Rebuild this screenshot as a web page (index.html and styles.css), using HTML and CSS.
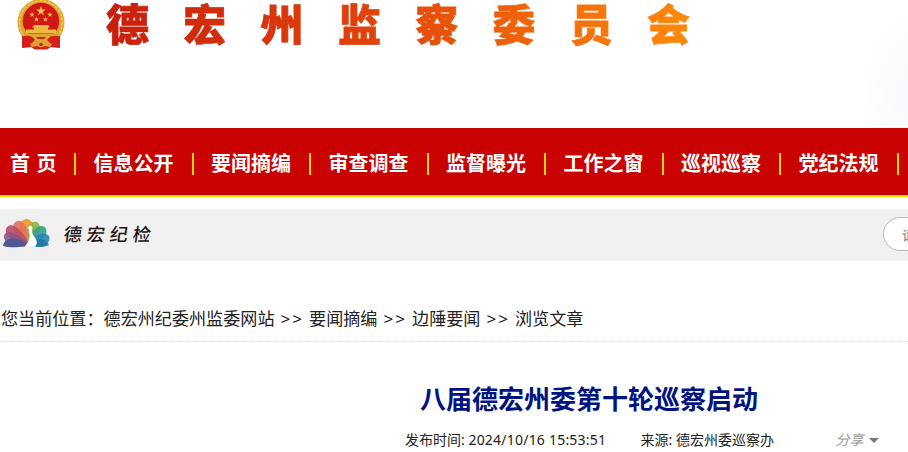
FILE: index.html
```html
<!DOCTYPE html>
<html lang="zh-CN">
<head>
<meta charset="utf-8">
<title>八届德宏州委第十轮巡察启动</title>
<link rel="stylesheet" href="styles.css">
</head>
<body>
<header class="header">
  <svg class="emblem" viewBox="0 0 48 50">
    <path fill="#d81e18" d="M5 32L43 32L42 48L34 47L30 49.500L18 49.500L14 47L6 48Z"/>
    <circle cx="24" cy="22.500" r="23.500" fill="#dda32b"/>
    <circle cx="24" cy="22.500" r="21.500" fill="none" stroke="#f3ca59" stroke-width="1.600" stroke-dasharray="3 1.300"/>
    <circle cx="24" cy="21" r="18.200" fill="#d01818"/>
    <path fill="#f3c64b" d="M24 6l1.200 3.500h3.700l-3 2.200 1.100 3.600-3-2.200-3 2.200 1.100-3.600-3-2.200h3.700z"/>
    <path fill="#efbb45" d="M15 12l.7 1.800h2l-1.600 1.200.6 2-1.700-1.200-1.700 1.200.6-2-1.600-1.200h2zM33 12l.7 1.800h2l-1.600 1.200.6 2-1.700-1.200-1.700 1.200.6-2-1.600-1.200h2zM19.500 17l.7 1.600h1.900l-1.500 1.200.6 1.900-1.700-1.200-1.700 1.200.6-1.900-1.500-1.200h1.900zM28.500 17l.7 1.600h1.900l-1.500 1.200.6 1.900-1.700-1.200-1.700 1.200.6-1.900-1.500-1.200h1.900z"/>
    <path fill="#f0b83c" d="M17 25h14l2 2.500h-2v2h8v4H9v-4h8v-2h-2z"/>
    <path fill="#e0a632" d="M8 34h32l-3 6-7 3H18l-7-3z"/>
    <path fill="#d42019" d="M5 36c7-1 11 0 13 4l-5 5-8 3zM43 36c-7-1-11 0-13 4l5 5 8 3zM19 37h10l-2 2h-6z"/>
    <path fill="#dfa136" d="M13 44l6-2 5 1 5-1 6 2-2 3-5-1-4 1.500-4-1.500-5 1z"/>
    <circle cx="24" cy="44.500" r="1.700" fill="#ca241a"/>
  </svg>
  <h1 class="site-name">德宏州监察委员会</h1>
</header>
<nav class="nav">
  <a class="home">首 页</a><a>信息公开</a><a>要闻摘编</a><a>审查调查</a><a>监督曝光</a><a>工作之窗</a><a>巡视巡察</a><a>党纪法规</a>
</nav>
<section class="toolbar">
  <svg class="peacock" viewBox="0 0 48 30">
    <path fill="#e9a23b" d="M25 28C15 15 14 3 24 0.500c10 2 10 15 1 27.500z"/>
    <path fill="#e2705c" fill-opacity=".9" d="M26 28C12 21 6 6 14 3c8-3 13 11 12 25z"/>
    <path fill="#86b646" fill-opacity=".9" d="M26 28C22 15 27 1 35 4c7 5 1 17-9 24z"/>
    <path fill="#b94c69" fill-opacity=".9" d="M27 28C9 25-1 15 4 9c7-7 19 8 23 19z"/>
    <path fill="#35a08c" fill-opacity=".9" d="M27 28C26 16 35 4 43 9c5 7-5 16-16 19z"/>
    <path fill="#8a5088" fill-opacity=".85" d="M27 28C14 31-1 26 1 17c5-7 20 2 26 11z"/>
    <path fill="#2788b2" fill-opacity=".9" d="M27 28c1-10 13-16 20-10 3 9-9 13-20 10z"/>
    <path fill="#505894" d="M27 28C15 18 2 18 0 28c7 3 18 1 27 0z"/>
    <path fill="#267ba4" d="M27 28c6-9 15-9 20-1-5 3-13 3-20 1z"/>
    <path fill="#fff" d="M26 9c1-2 4-2 4 1-1 4 0 7 3 10 2 3 2 6 0 9H22c4-4 6-9 5-14-1-2-1-3 0-4l-2-1z"/>
  </svg>
  <span class="brand">德宏纪检</span>
  <div class="search">请输入关键字</div>
</section>
<div class="crumbs"><span>您当前位置：</span><a>德宏州纪委州监委网站</a><i>&gt;&gt;</i><a>要闻摘编</a><i>&gt;&gt;</i><a>边陲要闻</a><i>&gt;&gt;</i><a>浏览文章</a></div>
<article class="article">
  <h2 class="title">八届德宏州委第十轮巡察启动</h2>
  <div class="meta">
    <span class="time">发布时间: <span class="date">2024/10/16 15:53:51</span></span>
    <span class="source">来源: 德宏州委巡察办</span>
    <span class="share">分享</span><span class="caret"></span>
  </div>
</article>
</body>
</html>
```
FILE: styles.css
```css
* { box-sizing: border-box; }
body {
  margin: 0;
  height: 452px;
  overflow: hidden;
  background: #fff;
  color: #222;
  font-family: "Noto Sans", "Noto Sans CJK SC", sans-serif;
}
.header {
  display: flex;
  align-items: flex-start;
  height: 128px;
  padding-left: 17px;
  background: radial-gradient(ellipse 60px 90px at 920px 95px, #f5f7fb, #fff);
}
.emblem { width: 48px; height: 50px; flex: none; }
.site-name {
  margin: 0 0 0 41px;
  height: 52px;
  line-height: 44px;
  font-family: "Noto Sans CJK SC", sans-serif;
  font-size: 43px;
  font-weight: 900;
  letter-spacing: 34.3px;
  white-space: nowrap;
  color: transparent;
  background: linear-gradient(90deg, #c81e0c, #e2450b 45%, #ff8a0a 95%);
  background-clip: text;
  -webkit-background-clip: text;
  -webkit-text-stroke: 0.8px transparent;
}
.nav {
  display: flex;
  align-items: center;
  width: 908px;
  height: 69px;
  overflow: hidden;
  background: #c90202;
  border-bottom: 2px solid #ffe600;
}
.nav a {
  flex: none;
  width: 117.5px;
  height: 22px;
  margin-top: 5px;
  padding-left: 17.5px;
  border-right: 2px solid #ffd800;
  color: #fff;
  font: bold 20px/20px "Noto Sans CJK SC", sans-serif;
  white-space: nowrap;
}
.nav .home { width: 76px; padding-left: 10px; word-spacing: 2px; }
.toolbar {
  display: flex;
  align-items: center;
  width: 908px;
  height: 52px;
  margin-top: 12px;
  padding-left: 3px;
  overflow: hidden;
  background: #f0f0f0;
}
.peacock { width: 47px; height: 30px; margin-top: -4px; flex: none; }
.brand {
  flex: none;
  width: 833px;
  margin-top: -4px;
  padding-left: 14px;
  font: 500 18px/30px "Noto Sans CJK SC", sans-serif;
  letter-spacing: 5px;
  color: #21110f;
  transform: skewX(-8deg);
  transform-origin: left center;
}
.search {
  flex: none;
  width: 220px;
  height: 34px;
  margin-top: -2px;
  padding-left: 18px;
  border: 1px solid #bbb;
  border-radius: 17px;
  background: #fff;
  color: #757575;
  font-size: 13px;
  line-height: 34px;
}
.crumbs {
  display: flex;
  height: 81px;
  padding: 45px 0 0 1px;
  border-bottom: 1px dotted #ddd;
  font-size: 17.1px;
  line-height: 26px;
  white-space: nowrap;
}
.crumbs i {
  width: 34.6px;
  padding-left: 6px;
  font-style: normal;
  letter-spacing: 2px;
}
.article { padding-top: 36px; }
.title {
  margin: 0 0 0 420px;
  color: #00137f;
  font: bold 26px/40px "Noto Sans CJK SC", sans-serif;
}
.meta {
  display: flex;
  align-items: center;
  padding-left: 405px;
  height: 20px;
  margin-top: 12px;
  font-size: 14px;
  line-height: 20px;
  white-space: nowrap;
}
.time { width: 235.5px; }
.date { letter-spacing: .22px; }
.source { width: 195px; }
.share { width: 33px; color: #999; font-style: italic; }
.caret {
  border: 5px solid transparent;
  border-top-color: #777;
  border-bottom: 0;
}
```
